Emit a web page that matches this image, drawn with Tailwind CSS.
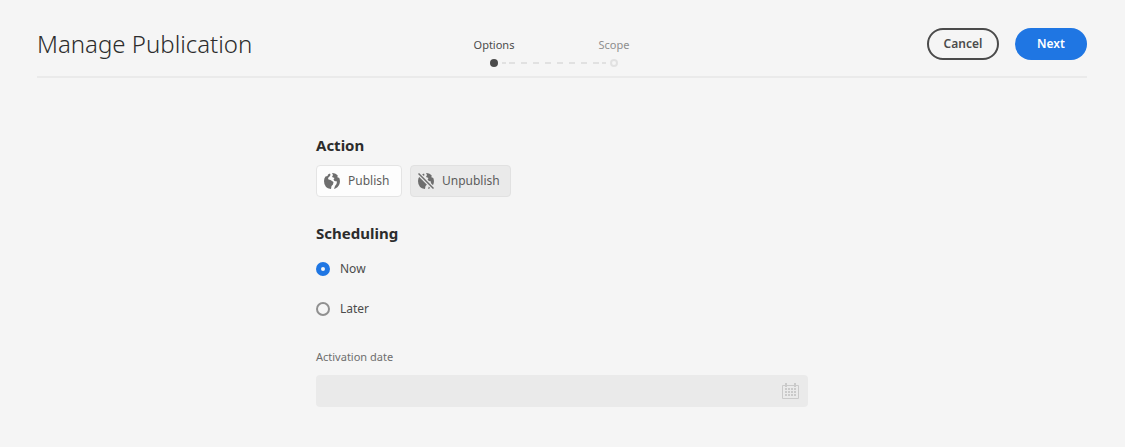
<!DOCTYPE html>
<html lang="en">
<head>
  <meta charset="UTF-8" />
  <meta name="viewport" content="width=device-width, initial-scale=1" />
  <title>Manage Publication</title>
  <script src="https://cdn.jsdelivr.net/npm/@tailwindcss/browser@4"></script>
</head>
<body class="bg-[#f5f5f5] min-h-screen font-['Noto_Sans','Open_Sans',sans-serif] text-[#4b4b4b]">

  <header class="grid grid-cols-[1fr_auto_1fr] items-center h-[78px] ml-[37px] mr-[38px] pt-3 border-b-2 border-[#eaeaea]">
    <h1 class="text-2xl font-light text-[#2c2c2c] whitespace-nowrap">Manage Publication</h1>

    <!-- Wizard steps -->
    <nav class="pr-4 pt-4" aria-label="Steps">
      <ol class="grid grid-cols-2 w-60 text-center text-[11px] leading-4">
        <li aria-current="step">Options</li>
        <li class="text-[#8e8e8e]">Scope</li>
      </ol>
      <div class="flex items-center gap-1 px-14 pt-1.5">
        <span class="size-2 rounded-full bg-[#4b4b4b]"></span>
        <svg class="flex-1 h-2" viewBox="0 0 104 8" fill="none" stroke="#e1e1e1" stroke-width="2" aria-hidden="true">
          <path d="M0 4h4M7 4h6M19 4h6M31 4h6M43 4h6M55 4h6M67 4h6M79 4h6M91 4h6M100 4h4" />
        </svg>
        <span class="size-2 rounded-full border-2 border-[#e1e1e1]"></span>
      </div>
    </nav>

    <div class="flex justify-end gap-4 text-xs font-semibold">
      <button type="button" class="w-[72px] h-8 rounded-full border-2 border-[#4b4b4b]">Cancel</button>
      <button type="button" class="w-[72px] h-8 rounded-full bg-[#1f76e3] text-white">Next</button>
    </div>
  </header>

  <form class="w-full max-w-[493px] mx-auto pt-[55px] pr-px">
    <h2 class="text-[15px] leading-6 font-bold text-[#2c2c2c]">Action</h2>
    <div class="flex gap-2 pt-2 text-xs text-[#5c5c5c]">
      <button type="button" class="flex items-center gap-2 h-8 w-[86px] pl-[7px] rounded border border-[#e4e4e4] bg-[#fdfdfd]">
        <svg class="size-4" viewBox="0 0 16 16" fill="#6e6e6e" aria-hidden="true">
          <path d="M0 8Q0 5 1.500 3.500L3.500 3L4 1.500L6 .5L6.500 2L5.500 3.500L4 5L4.500 6.500L6.500 7L9.500 9L9 11.500L7.500 13L7 16Q0 15 0 8Z" />
          <path d="M8 0Q12 0 14 3L13 4L15.300 5Q16.500 8 15.500 11Q14 15 10 16L11 13L12.500 11L13 8.500L10.500 8L9.500 6.500L10.500 5L8 4L9 2Z" />
        </svg>
        Publish
      </button>
      <button type="button" class="flex items-center gap-2 h-8 w-[101px] pl-[7px] rounded border border-[#e1e1e1] bg-[#eaeaea]">
        <svg class="size-4" viewBox="0 0 16 16" fill="#6e6e6e" aria-hidden="true">
          <path d="M0 8Q0 5 1.500 3.500L3.500 3L4 1.500L6 .5L6.500 2L5.500 3.500L4 5L4.500 6.500L6.500 7L9.500 9L9 11.500L7.500 13L7 16Q0 15 0 8Z" />
          <path d="M8 0Q12 0 14 3L13 4L15.300 5Q16.500 8 15.500 11Q14 15 10 16L11 13L12.500 11L13 8.500L10.500 8L9.500 6.500L10.500 5L8 4L9 2Z" />
          <path stroke="#eaeaea" stroke-width="4" d="M0 0L16 16" />
          <path stroke="#6e6e6e" stroke-width="1.500" d="M.5.5L15.500 15.500" />
        </svg>
        Unpublish
      </button>
    </div>

    <h2 class="pt-6 text-[15px] leading-6 font-bold text-[#2c2c2c]">Scheduling</h2>
    <div class="flex flex-col pt-1 text-xs">
      <label class="flex items-center gap-2.5 h-10">
        <input type="radio" name="schedule" value="now" checked class="appearance-none size-3.5 rounded-full border-2 border-[#909090] bg-[#f5f5f5] checked:border-[5px] checked:border-[#1f76e3]" />
        Now
      </label>
      <label class="flex items-center gap-2.5 h-10">
        <input type="radio" name="schedule" value="later" class="appearance-none size-3.5 rounded-full border-2 border-[#909090] bg-[#f5f5f5] checked:border-[5px] checked:border-[#1f76e3]" />
        Later
      </label>
    </div>

    <label for="activation" class="block pt-5 text-[11px] leading-4 text-[#6e6e6e]">Activation date</label>
    <div class="flex items-center mt-2.5 h-8 rounded bg-[#eaeaea]">
      <input id="activation" type="text" disabled class="flex-1 min-w-0 h-8 px-3 text-xs" />
      <button type="button" disabled aria-label="Open calendar" class="pr-2">
        <svg class="size-[18px]" viewBox="0 0 18 18" aria-hidden="true">
          <path fill="none" stroke="#cacaca" d="M.5 3.500h16v13H.5z" />
          <path fill="#cacaca" d="M3 1h2v4H3zM12 1h2v4h-2zM3 6h2v2H3zM6 6h2v2H6zM9 6h2v2H9zM12 6h2v2h-2zM3 9h2v2H3zM6 9h2v2H6zM9 9h2v2H9zM12 9h2v2h-2zM3 12h2v2H3zM6 12h2v2H6zM9 12h2v2H9zM12 12h2v2h-2z" />
        </svg>
      </button>
    </div>
  </form>

</body>
</html>
